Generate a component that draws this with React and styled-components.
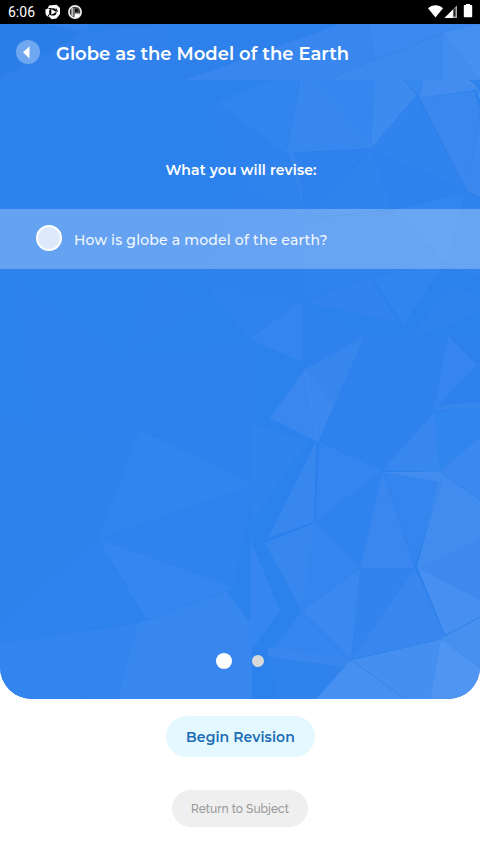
import React from "react";
import styled, { createGlobalStyle } from "styled-components";

const GlobalStyle = createGlobalStyle`
  * { box-sizing: border-box; }
  html, body { margin: 0; background: #fff; }
  button { border: 0; padding: 0; font: inherit; cursor: pointer; }
`;

const Screen = styled.div`
  width: 480px;
  height: 854px;
  display: flex;
  flex-direction: column;
  overflow: hidden;
  background: #fff;
  font-family: Montserrat, Inter, sans-serif;
`;

const StatusBar = styled.div`
  height: 24px;
  flex: none;
  display: flex;
  align-items: center;
  justify-content: space-between;
  padding: 0 7px 0 8px;
  background: #000;
  color: #fff;
`;

const StatusGroup = styled.div`
  display: flex;
  align-items: center;
  height: 24px;
`;

const Clock = styled.span`
  font: 400 14px/24px Roboto, sans-serif;
  width: 37px;
`;

const Header = styled.header`
  position: relative;
  height: 56px;
  flex: none;
  display: flex;
  align-items: center;
  padding: 0 16px;
  gap: 16px;
  background: #2e80e9;
`;

const Backdrop = styled.svg`
  position: absolute;
  inset: 0;
  width: 100%;
  height: 100%;
  display: block;
`;

const BackButton = styled.button`
  position: relative;
  width: 24px;
  height: 24px;
  border-radius: 50%;
  background: #6fa7f0;
  display: flex;
  align-items: center;
  justify-content: center;
`;

const Title = styled.h1`
  position: relative;
  margin: 3px 0 0;
  color: #fff;
  font-size: 18px;
  line-height: 24px;
  font-weight: 600;
  white-space: nowrap;
`;

const Panel = styled.main`
  position: relative;
  height: 619px;
  flex: none;
  display: flex;
  flex-direction: column;
  align-items: stretch;
  overflow: hidden;
  border-radius: 0 0 32px 32px;
  background: #2c82ed;
`;

const Subtitle = styled.h2`
  position: relative;
  margin: 80px 0 29px;
  padding-left: 2px;
  color: #fff;
  text-align: center;
  font-size: 14px;
  line-height: 20px;
  font-weight: 600;
  letter-spacing: 0.12px;
`;

const TopicRow = styled.div`
  position: relative;
  height: 60px;
  display: flex;
  align-items: center;
  padding: 0 36px;
  gap: 12px;
  background: rgba(255, 255, 255, 0.27);
`;

const Marker = styled.span`
  width: 26px;
  height: 26px;
  margin-bottom: 3px;
  border: 2px solid #fff;
  border-radius: 50%;
  background: #deeafb;
`;

const Topic = styled.span`
  color: #f3f8fe;
  font-size: 14px;
  line-height: 20px;
  font-weight: 500;
  letter-spacing: 0.18px;
  padding-top: 2px;
`;

const Pager = styled.div`
  position: relative;
  margin-top: auto;
  height: 16px;
  margin-bottom: 30px;
  display: flex;
  align-items: center;
  justify-content: center;
  gap: 20px;
`;

const Dot = styled.span`
  width: ${(p) => (p.$active ? 16 : 12)}px;
  height: ${(p) => (p.$active ? 16 : 12)}px;
  border-radius: 50%;
  background: ${(p) => (p.$active ? "#fff" : "#d9d9d9")};
`;

const Actions = styled.footer`
  display: flex;
  flex-direction: column;
  align-items: center;
  padding-top: 17px;
  gap: 33px;
`;

const PrimaryButton = styled.button`
  width: 149px;
  height: 41px;
  border-radius: 21px;
  background: #e4f8ff;
  color: #1b6cb5;
  font-size: 14px;
  line-height: 20px;
  font-weight: 600;
  letter-spacing: 0.1px;
  padding-top: 1px;
  margin-left: 1px;
`;

const SecondaryButton = styled.button`
  width: 136px;
  height: 37px;
  border-radius: 19px;
  background: #efefef;
  color: #999;
  font-family: Raleway, Lato, sans-serif;
  font-size: 12px;
  font-weight: 500;
  line-height: 18px;
`;

// Each facet is [fill, points].
const headerFacets = [
  ["#2c7ee7", "0,24 45,24 85,32 0,78"],
  ["#3081ec", "85,32 168,24 160,80 0,80"],
  ["#3383ed", "45,24 90,24 85,32"],
  ["#2e80ea", "168,24 340,24 186,80 160,80"],
  ["#3987ee", "186,80 340,24 368,24 376,59 327,80"],
  ["#3c8aef", "368,24 480,24 443,33 376,59"],
  ["#3d8aee", "376,59 443,33 443,80 327,80"],
  ["#428df0", "443,33 480,80 443,80"],
  ["#4690f1", "443,33 480,24 480,80"],
];

const panelFacets = [
  ["#2e82ed", "203,100 217,103 286,153 240,184"],
  ["#3285ed", "217,103 270,80 300,80 286,153"],
  ["#3787ef", "300,80 316,80 371,149 286,153"],
  ["#3586ee", "316,80 375,80 371,148"],
  ["#3d8bef", "375,80 404,80 417,95 371,149"],
  ["#3788ef", "404,80 423,80 420,98"],
  ["#438df0", "423,80 480,80 474,90 420,98"],
  ["#3a88ee", "420,98 474,91 480,110 467,191"],
  ["#3184ee", "417,95 467,191 371,149"],
  ["#2f81ed", "371,149 467,190 392,209"],
  ["#2f82ed", "286,153 371,149 306,218"],
  ["#3084ed", "371,149 392,209 306,218"],
  ["#3083ec", "240,184 286,153 306,218"],
  ["#3686ee", "288,150 294,150 306,218"],
  ["#3b89ef", "467,191 480,115 480,197"],
  ["#3486ef", "392,211 467,190 445,262"],
  ["#3083ee", "304,220 392,211 445,262 373,277 304,300"],
  ["#2f81ed", "240,184 304,220 304,302 205,286"],
  ["#2f83ed", "467,191 480,200 480,280 445,262"],
  ["#3083ee", "205,286 303,302 251,340"],
  ["#3485ee", "251,340 303,302 302,362"],
  ["#3283ef", "305,302 370,277 397,322"],
  ["#3284ee", "372,277 445,262 403,325"],
  ["#3083ed", "452,285 480,296 480,311 405,343"],
  ["#2f81ed", "305,306 365,336 305,369"],
  ["#3686ee", "365,336 305,369 318,442"],
  ["#3a88ef", "270,418 305,369 318,442"],
  ["#3b89ef", "305,369 334,404 318,442"],
  ["#2f81ee", "365,336 448,336 434,411 383,470 320,441"],
  ["#3786ef", "448,336 477,365 434,410"],
  ["#2e80ec", "448,336 480,336 480,403 434,410 477,365"],
  ["#3686ed", "434,406 480,402 480,408 434,411"],
  ["#3086ed", "434,412 480,408 480,437 440,472"],
  ["#3887ef", "434,412 383,470 440,472"],
  ["#3b89ef", "440,472 480,437 480,500"],
  ["#3485ef", "319,442 383,471 315,522"],
  ["#3887ef", "316,442 314,522 268,538"],
  ["#3887ee", "265,543 315,523 302,611"],
  ["#3585ee", "315,523 360,568 302,611"],
  ["#3082ef", "315,522 383,471 360,568"],
  ["#3a88ef", "383,471 415,568 360,568"],
  ["#3485ed", "383,472 441,482 415,568"],
  ["#448df0", "383,472 441,472 441,482"],
  ["#418cef", "441,472 480,500 480,536 417,567"],
  ["#3e8aef", "417,567 480,536 480,600"],
  ["#4790f1", "417,567 480,600 480,617 445,635"],
  ["#3284ec", "360,568 415,568 351,660"],
  ["#3886ee", "415,568 445,636 441,639 351,660"],
  ["#3b89ef", "302,611 360,569 351,660"],
  ["#3485ee", "302,611 351,660 268,655"],
  ["#3987ee", "268,647 351,658 358,669 268,657"],
  ["#2f83eb", "268,657 345,667 316,699 279,699"],
  ["#4690f1", "351,660 405,699 316,699"],
  ["#448fef", "351,660 441,639 430,699 405,699"],
  ["#4f95f1", "441,639 480,668 480,699 430,699"],
  ["#4790f0", "445,636 480,617 480,668 441,639"],
  ["#2d82ee", "15,280 125,357 34,428"],
  ["#2e82ee", "153,275 203,303 127,355"],
  ["#2d81ec", "127,355 252,345 254,361 142,428"],
  ["#2f82ee", "34,428 125,357 139,439"],
  ["#2f81ee", "142,428 254,361 254,484"],
  ["#3084ec", "252,425 308,441 252,520"],
  ["#2f82ec", "34,428 139,439 98,539 0,624 0,413"],
  ["#3285ed", "98,539 140,430 255,484"],
  ["#3083ee", "98,539 255,484 233,588"],
  ["#3586ee", "98,539 235,588 146,620"],
  ["#2f83ee", "0,624 98,539 146,620 0,643"],
  ["#3384ed", "0,643 138,623 117,699 0,699"],
  ["#3787ee", "138,623 226,591 252,625 252,699 117,699"],
  ["#3686ef", "250,538 280,611 250,652"],
];

const creases = [
  ["#2d7de5", "286,153 300,80"],
  ["#2a7ce6", "286,153 371,149 417,95"],
  ["#2c7de6", "371,149 306,218"],
  ["#297be5", "404,80 417,95 467,191"],
  ["#2b7ee9", "467,191 392,209 304,220"],
  ["#297de8", "305,301 370,277 403,325"],
  ["#4a92ef", "305,369 318,442"],
  ["#4890f0", "251,340 303,302"],
  ["#247bea", "318,442 315,522"],
  ["#267bea", "315,522 265,541"],
  ["#2b7ee8", "383,471 415,568 441,482"],
  ["#267eea", "417,567 445,636 480,617"],
  ["#589bef", "417,567 480,535"],
  ["#267dea", "302,611 351,660 441,639"],
  ["#387fe4", "351,660 405,699"],
  ["#2a7fea", "98,539 146,620 226,591"],
  ["#2c80e9", "142,428 255,484"],
  ["#2a7fea", "0,658 88,699"],
  ["#4b91ee", "371,148 330,98"],
  ["#247ae8", "441,472 480,500"],
];

function Facets({ data }) {
  return data.map(([fill, points], i) => (
    <polygon key={i} points={points} fill={fill} />
  ));
}

export default function App() {
  return (
    <Screen>
      <GlobalStyle />
      <StatusBar>
        <StatusGroup>
          <Clock>6:06</Clock>
          <svg width="38" height="16" viewBox="0 0 38 16">
            <path
              fill="#fff"
              d="M4 1.500 11.500.8 13.500 2.500 15 4v6l-1.500 2-2 2.500-5 .7L4 12.500 2 12.300.6 10 .4 5.500 2.500 4.800z"
            />
            <circle cx="7.800" cy="7.900" r="3.700" fill="#000" />
            <path d="M6.300 5 11.300 7.900 6.300 10.800z" fill="#fff" />
            <path d="M3.500 4.300 6.500 4.800M11 4.500l1.500 3.500M4.800 9.500l-1.500 2.500" stroke="#000" strokeWidth="1" />
            <circle cx="30" cy="8" r="6.100" fill="#2b2b2b" stroke="#eee" strokeWidth="1.700" />
            <path d="M26.300 4h2.200v9.200l-2.200-1.400z" fill="#bbb" />
            <path d="M29.500 4h4.300v4.800h-4.300z" fill="#161616" stroke="#777" strokeWidth=".8" />
            <path d="M29.500 9.600h5.500A5.500 5.500 0 0 1 29.500 14z" fill="#fff" />
          </svg>
        </StatusGroup>
        <StatusGroup>
          <svg width="46" height="24" viewBox="427 0 46 24">
            <path d="M428 8.200c4-3.900 11-3.900 15 0L435.500 17.500z" fill="#fff" />
            <path d="M444.500 18 457 5.500V18z" fill="#aaa" />
            <path d="M444.500 18 453 9.500V18z" fill="#fff" />
            <path d="M453.500 9.500v7h2V8z" fill="#222" />
            <path d="M466 4h4v1h1.500q.7 0 .7.700V16.500q0 .7-.7.700h-7q-.7 0-.7-.700V5.700q0-.7.7-.700H466z" fill="#fff" />
          </svg>
        </StatusGroup>
      </StatusBar>

      <Header>
        <Backdrop viewBox="0 24 480 56" preserveAspectRatio="none" aria-hidden="true">
          <Facets data={headerFacets} />
          <path d="M327 80 376 59 443 33" fill="none" stroke="#3482e6" strokeWidth=".7" />
        </Backdrop>
        <BackButton aria-label="Back">
          <svg width="24" height="24" viewBox="0 0 24 24">
            <path d="M7 12.300 13.500 6.200V18.400z" fill="#fff" />
          </svg>
        </BackButton>
        <Title>Globe as the Model of the Earth</Title>
      </Header>

      <Panel>
        <Backdrop viewBox="0 80 480 619" preserveAspectRatio="none" aria-hidden="true">
          <Facets data={panelFacets} />
          {creases.map(([color, points], i) => (
            <polyline key={i} points={points} fill="none" stroke={color} strokeWidth=".9" opacity=".55" />
          ))}
          <path d="M465 80h15v18q-2-14-15-18z" fill="#2f83ed" />
          <path d="M465 80q13 4 15 18" fill="none" stroke="#599bf0" />
        </Backdrop>
        <Subtitle>What you will revise:</Subtitle>
        <TopicRow>
          <Marker />
          <Topic>How is globe a model of the earth?</Topic>
        </TopicRow>
        <Pager>
          <Dot $active />
          <Dot />
        </Pager>
      </Panel>

      <Actions>
        <PrimaryButton>Begin Revision</PrimaryButton>
        <SecondaryButton>Return to Subject</SecondaryButton>
      </Actions>
    </Screen>
  );
}
